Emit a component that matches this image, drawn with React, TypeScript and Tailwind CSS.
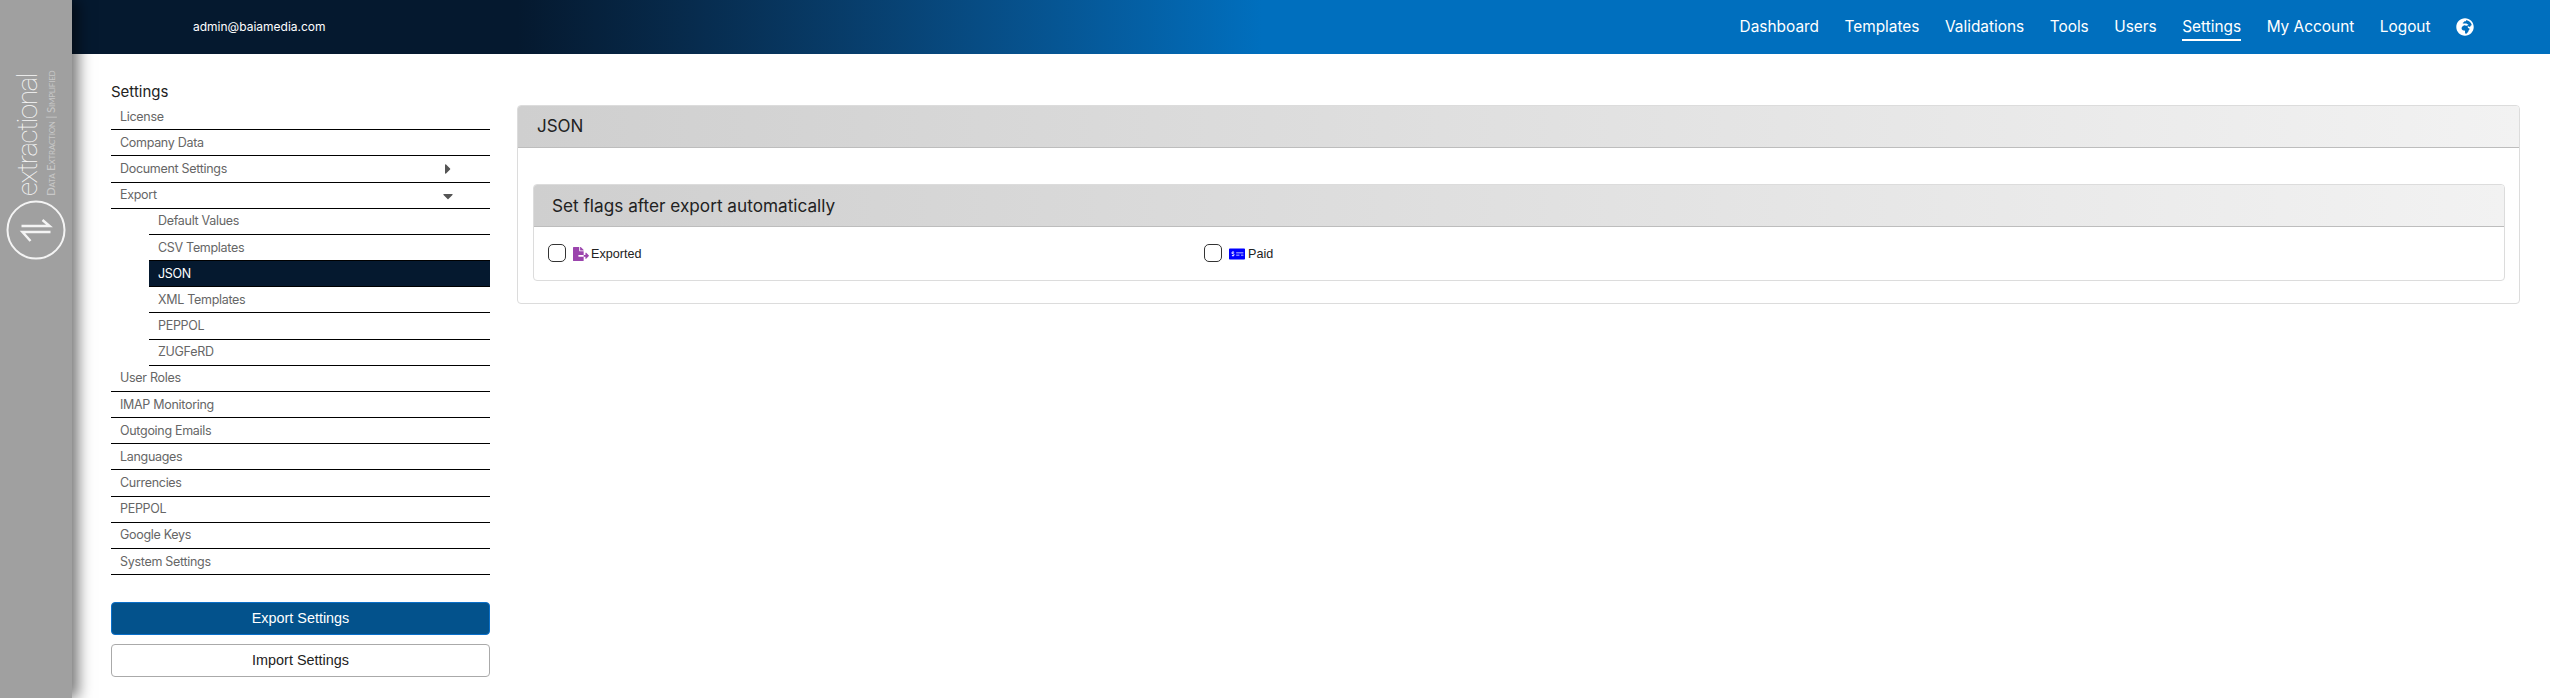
import { FaCaretDown, FaCaretRight, FaFileExport, FaGlobeAfrica, FaMoneyCheckAlt } from "react-icons/fa";

const navLinks = ["Dashboard", "Templates", "Validations", "Tools", "Users", "Settings", "My Account", "Logout"];

type MenuItem = { label: string; caret?: "right" | "down"; sub?: boolean; active?: boolean };

const menu: MenuItem[] = [
  { label: "License" },
  { label: "Company Data" },
  { label: "Document Settings", caret: "right" },
  { label: "Export", caret: "down" },
  { label: "Default Values", sub: true },
  { label: "CSV Templates", sub: true },
  { label: "JSON", sub: true, active: true },
  { label: "XML Templates", sub: true },
  { label: "PEPPOL", sub: true },
  { label: "ZUGFeRD", sub: true },
  { label: "User Roles" },
  { label: "IMAP Monitoring" },
  { label: "Outgoing Emails" },
  { label: "Languages" },
  { label: "Currencies" },
  { label: "PEPPOL" },
  { label: "Google Keys" },
  { label: "System Settings" },
];

function Logo() {
  return (
    <div className="flex flex-col items-center pt-[74px]">
      <div className="mr-[4px] flex h-[122px] rotate-180 flex-col items-start gap-[3px] whitespace-nowrap [writing-mode:vertical-rl]">
        <span className="text-[28px] leading-[30px] font-thin tracking-[-1.5px] text-[#f7f7f7] font-['Roboto',sans-serif]">
          extractional
        </span>
        <span className="text-[11.5px] leading-[10px] tracking-[-0.2px] text-[#c8c8c8] [font-variant:small-caps] font-['Lato',sans-serif]">
          Data Extraction | Simplified
        </span>
      </div>
      <svg width="60" height="60" viewBox="0 0 60 60" fill="none" stroke="#f4f4f4" className="mt-[4px]">
        <circle cx="30" cy="30" r="28.5" strokeWidth="2" />
        <path d="M15.5 26H43.5L36.5 20M44.5 32H16.5L24.5 41" strokeWidth="2.5" />
      </svg>
    </div>
  );
}

export default function App() {
  return (
    <div className="flex h-screen overflow-hidden bg-white">
      <aside className="relative z-10 w-[72px] shrink-0 bg-[#a0a0a0] shadow-[6px_0_14px_rgba(0,0,0,0.55)]">
        <Logo />
      </aside>

      <div className="flex min-w-0 flex-1 flex-col">
        <header className="flex h-[54px] shrink-0 items-center justify-between bg-gradient-to-r from-[#05192f] from-[18%] to-[#006fbe] to-[48%] pr-[76px] pl-[121px] font-['Inter',sans-serif] text-white">
          <span className="text-[12px]">admin@baiamedia.com</span>
          <nav className="flex items-center gap-[25.5px] text-[15.4px]">
            {navLinks.map((link) => (
              <a key={link} className={link === "Settings" ? "border-b-2 border-white pt-[2px] leading-[24px]" : "leading-[24px]"}>
                {link}
              </a>
            ))}
            <FaGlobeAfrica className="text-[18px]" />
          </nav>
        </header>

        <main className="flex flex-1 pt-[24px] pr-[30px] pl-[39px] font-['Inter',sans-serif]">
          <div className="w-[379px] shrink-0">
            <h2 className="h-[26px] text-[15px] leading-[28px] text-[#222]">Settings</h2>
            <ul>
              {menu.map((item, i) => (
                <li
                  key={i}
                  className={`flex h-[26.18px] items-center justify-between border-b border-black pt-[1px] pr-[34px] text-[12.5px] tracking-[-0.3px] ${
                    item.sub ? "ml-[38px] pl-[9px]" : "pl-[9px]"
                  } ${item.active ? "bg-[#05192f] text-white" : "text-[#666]"}`}
                >
                  {item.label}
                  {item.caret === "right" && <FaCaretRight className="text-[16px] text-[#555]" />}
                  {item.caret === "down" && <FaCaretDown className="text-[16px] text-[#555]" />}
                </li>
              ))}
            </ul>
            <div className="mt-[27px] flex flex-col gap-[9px] font-['Liberation_Sans',sans-serif] text-[14.4px]">
              <button className="h-[33px] rounded border border-[#0a6fc9] bg-[#03528c] text-white">Export Settings</button>
              <button className="h-[33px] rounded border border-[#aaa] bg-white text-[#222]">Import Settings</button>
            </div>
          </div>

          <div className="mt-[27px] ml-[27px] h-[199px] flex-1 rounded border border-[#dcdcdc]">
            <div className="flex h-[42px] items-center rounded-t-[3px] border-b border-[#bdbdbd] bg-gradient-to-r from-[#cfcfcf] to-[#f2f2f2] pl-[19px] text-[17px] text-[#222]">
              JSON
            </div>
            <div className="pt-[36px] pr-[14px] pl-[15px]">
              <div className="h-[97px] rounded border border-[#dcdcdc]">
                <div className="flex h-[42px] items-center rounded-t-[3px] border-b border-[#bdbdbd] bg-gradient-to-r from-[#cfcfcf] to-[#f2f2f2] pl-[18px] text-[17.2px] text-[#222]">
                  Set flags after export automatically
                </div>
                <div className="flex pt-[16px] pl-[14px] font-['Liberation_Sans',sans-serif] text-[12.6px] text-[#222]">
                  <label className="flex w-[656px] items-center">
                    <span className="h-[18px] w-[18px] rounded-[5px] border border-[#333]" />
                    <FaFileExport className="mt-[2px] ml-[7px] text-[16px] text-[#9b44ad]" />
                    <span className="mt-[2px] ml-[2px]">Exported</span>
                  </label>
                  <label className="flex items-center">
                    <span className="h-[18px] w-[18px] rounded-[5px] border border-[#333]" />
                    <FaMoneyCheckAlt className="mt-[2px] ml-[7px] text-[16px] text-[#0000ff]" />
                    <span className="mt-[2px] ml-[3px]">Paid</span>
                  </label>
                </div>
              </div>
            </div>
          </div>
        </main>
      </div>
    </div>
  );
}
